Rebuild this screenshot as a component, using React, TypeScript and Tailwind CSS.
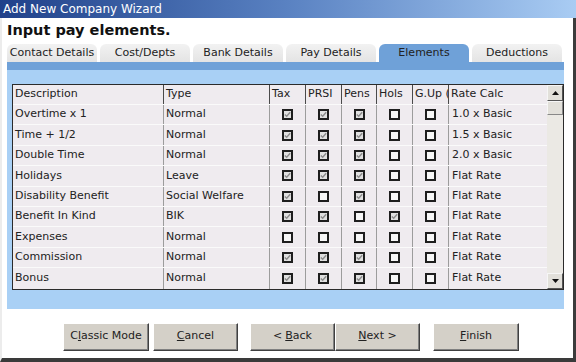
import React from "react";

type Row = {
  desc: string;
  type: string;
  flags: boolean[];
  rate: string;
};

const rows: Row[] = [
  { desc: "Overtime x 1", type: "Normal", flags: [true, true, true, false, false], rate: "1.0 x Basic" },
  { desc: "Time + 1/2", type: "Normal", flags: [true, true, true, false, false], rate: "1.5 x Basic" },
  { desc: "Double Time", type: "Normal", flags: [true, true, true, false, false], rate: "2.0 x Basic" },
  { desc: "Holidays", type: "Leave", flags: [true, true, true, false, false], rate: "Flat Rate" },
  { desc: "Disability Benefit", type: "Social Welfare", flags: [true, false, true, false, false], rate: "Flat Rate" },
  { desc: "Benefit In Kind", type: "BIK", flags: [true, true, false, true, false], rate: "Flat Rate" },
  { desc: "Expenses", type: "Normal", flags: [false, false, false, false, false], rate: "Flat Rate" },
  { desc: "Commission", type: "Normal", flags: [true, true, true, false, false], rate: "Flat Rate" },
  { desc: "Bonus", type: "Normal", flags: [true, true, true, false, false], rate: "Flat Rate" },
];

const tabs = ["Contact Details", "Cost/Depts", "Bank Details", "Pay Details", "Elements", "Deductions"];

const cols = "grid grid-cols-[151px_106px_36px_36px_35px_36px_36px_98px]";

function Check({ on }: { on: boolean }) {
  return (
    <span
      className={`flex h-[11px] w-[11px] items-center justify-center border-2 border-[#1e1e1e] ${
        on ? "bg-[#e0e0e0]" : "bg-[#f7f7f7]"
      }`}
    >
      {on && (
        <svg width="7" height="7" viewBox="0 0 7 7">
          <path d="M0.8 3.4 L2.7 5.3 L6.2 1.2" stroke="#8c8c8c" strokeWidth="1.4" fill="none" />
        </svg>
      )}
    </span>
  );
}

function Arrow({ up }: { up: boolean }) {
  return (
    <svg width="7" height="4" viewBox="0 0 7 4">
      <path d={up ? "M0 4 L3.5 0 L7 4 Z" : "M0 0 L3.5 4 L7 0 Z"} fill="#111" />
    </svg>
  );
}

function WinButton({ children, className }: { children: React.ReactNode; className?: string }) {
  return (
    <button
      className={`flex h-[28px] items-center justify-center border border-t-white border-l-white border-b-[#404040] border-r-[#404040] bg-[#d4d0c8] text-[11px] text-[#222] shadow-[inset_-1px_-1px_0_#808080] ${className ?? ""}`}
    >
      {children}
    </button>
  );
}

const App: React.FC = () => {
  return (
    <div className="flex h-[362px] w-[576px] flex-col overflow-hidden bg-white font-['DejaVu_Sans',sans-serif]">
      {/* Title bar */}
      <div className="flex h-[18px] items-center bg-gradient-to-r from-[#20418a] via-[#5a82c2] to-[#a9ccf3] pl-[3px] text-[12px] text-white">
        Add New Company Wizard
      </div>

      <div className="flex flex-1 flex-col border-b-4 border-l-2 border-r-[3px] border-b-[#3a3a3a] border-l-[#ececec] border-r-[#3c3c3c]">
        {/* Heading */}
        <div className="flex h-[26px] items-center pl-[5px] text-[14.5px] font-bold text-[#111]">
          Input pay elements.
        </div>

        {/* Tabs */}
        <div className="ml-[5px] flex h-[18px] gap-[3px]">
          {tabs.map((t) => (
            <div
              key={t}
              className={`flex w-[90px] items-center justify-center rounded-t-[6px] text-[11px] text-[#222] ${
                t === "Elements" ? "bg-[#6fa1d8]" : "bg-gradient-to-b from-[#f2f2f2] to-[#e4e4e4]"
              }`}
            >
              {t}
            </div>
          ))}
        </div>

        {/* Panel */}
        <div className="ml-[5px] w-[557px]">
          <div className="h-[8px] bg-[#6fa1d8]" />
          <div className="bg-[#a9d0f5] pb-[19px] pl-[5px] pt-[14px]">
            <div className="flex w-[552px] border border-[#2b2b2b] bg-[#efebef] text-[11px] text-[#222]">
              <div className="flex-1">
                <div className={`${cols} h-[20px] border-b border-[#fafafa]`}>
                  {["Description", "Type", "Tax", "PRSI", "Pens", "Hols", "G.Up (", "Rate Calc"].map((h, i) => (
                    <div
                      key={h}
                      className={`flex items-center overflow-hidden whitespace-nowrap pl-[2px] ${
                        i < 7 ? "border-r border-[#4a4a4a]" : ""
                      }`}
                    >
                      {h}
                    </div>
                  ))}
                </div>
                {rows.map((r, ri) => (
                  <div
                    key={r.desc}
                    className={`${cols} h-[20.4px] ${ri < rows.length - 1 ? "border-b border-[#fafafa]" : ""}`}
                  >
                    <div className="flex items-center border-r border-[#9c9c9c] pl-[2px]">{r.desc}</div>
                    <div className="flex items-center border-r border-[#9c9c9c] pl-[2px]">{r.type}</div>
                    {r.flags.map((f, i) => (
                      <div key={i} className="flex items-center justify-center border-r border-[#9c9c9c]">
                        <Check on={f} />
                      </div>
                    ))}
                    <div className="flex items-center pl-[3px]">{r.rate}</div>
                  </div>
                ))}
              </div>

              {/* Scrollbar */}
              <div className="flex w-[16px] flex-col bg-[#ebe9e4]">
                <div className="flex h-[16px] items-center justify-center border border-t-[#f6f6f6] border-l-[#f6f6f6] border-b-[#555] border-r-[#555] bg-[#e2e0da]">
                  <Arrow up />
                </div>
                <div className="h-[14px] border border-t-[#f6f6f6] border-l-[#f6f6f6] border-b-[#888] border-r-[#888] bg-[#e2e0da]" />
                <div className="flex-1" />
                <div className="flex h-[16px] items-center justify-center border border-t-[#f6f6f6] border-l-[#f6f6f6] border-b-[#555] border-r-[#555] bg-[#e2e0da]">
                  <Arrow up={false} />
                </div>
              </div>
            </div>
          </div>
        </div>

        {/* Buttons */}
        <div className="flex pt-[14px]">
          <WinButton className="ml-[61px] w-[86px]">
            C<span className="underline">l</span>assic Mode
          </WinButton>
          <WinButton className="ml-[4px] w-[85px]">
            <span className="underline">C</span>ancel
          </WinButton>
          <WinButton className="ml-[12px] w-[85px]">
            &lt; <span className="ml-[3px] underline">B</span>ack
          </WinButton>
          <WinButton className="w-[85px]">
            <span className="underline">N</span>ext &gt;
          </WinButton>
          <WinButton className="ml-[13px] w-[86px]">
            <span className="underline">F</span>inish
          </WinButton>
        </div>
      </div>
    </div>
  );
};

export default App;
